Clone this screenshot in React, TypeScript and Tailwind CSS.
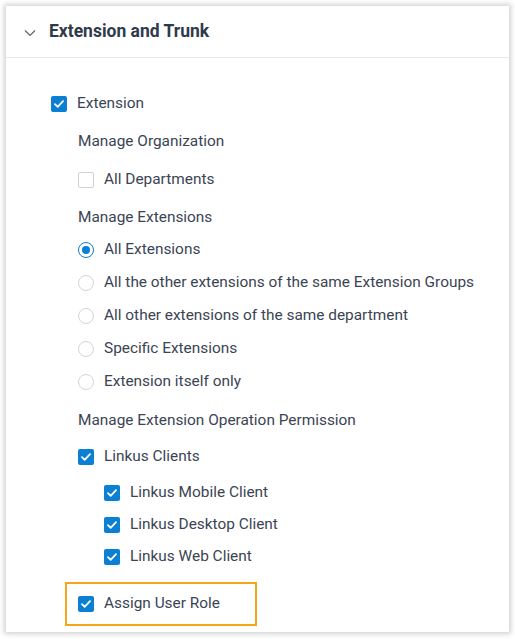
import React from "react";

const Check = () => (
  <span className="flex h-[16px] w-[16px] shrink-0 items-center justify-center rounded-[2px] bg-[#0b7fd2]">
    <svg width="10" height="8" viewBox="0 0 10 8" fill="none">
      <path d="M1 4.2L3.7 6.8L9 1.2" stroke="white" strokeWidth="1.8" strokeLinecap="round" strokeLinejoin="round" />
    </svg>
  </span>
);

const Empty = () => (
  <span className="h-[16px] w-[16px] shrink-0 rounded-[2px] border border-[#cfd0da] bg-white" />
);

const Radio = ({ on }: { on?: boolean }) =>
  on ? (
    <span className="flex h-[16px] w-[16px] shrink-0 items-center justify-center rounded-full border border-[#0b7fd2] bg-white">
      <span className="h-[8px] w-[8px] rounded-full bg-[#0b7fd2]" />
    </span>
  ) : (
    <span className="h-[16px] w-[16px] shrink-0 rounded-full border border-[#d3d4de] bg-white" />
  );

const Row = ({ mt, pl, icon, text }: { mt: string; pl: string; icon?: React.ReactNode; text: string }) => (
  <div className={`flex h-[20px] items-center gap-[10px] ${mt} ${pl}`}>
    {icon}
    <span>{text}</span>
  </div>
);

export default function App() {
  return (
    <div className="h-[639px] w-[515px] bg-white p-[6px]" style={{ fontFamily: "Roboto, 'Noto Sans', sans-serif" }}>
      <div className="h-[626px] w-[503px] bg-white shadow-[0_0_5px_2px_rgba(0,0,0,0.18)]">
        <div className="flex h-[52px] items-center border-b border-[#e8e8f0] pl-[18px]">
          <svg width="12" height="8" viewBox="0 0 12 8" fill="none" className="mt-[2px]">
            <path d="M1 1.5L6 6.5L11 1.5" stroke="#5b6372" strokeWidth="1.2" />
          </svg>
          <span className="ml-[13px] text-[17.5px] font-bold text-[#2f3a4b]">Extension and Trunk</span>
        </div>
        <div className="flex flex-col pt-[36px] text-[15.4px] text-[#3b4454]">
          <div className="flex h-[20px] items-center gap-[10px] pl-[45px]">
            <Check />
            <span>Extension</span>
          </div>
          <Row mt="mt-[18px]" pl="pl-[72px]" text="Manage Organization" />
          <Row mt="mt-[18px]" pl="pl-[72px]" icon={<Empty />} text="All Departments" />
          <Row mt="mt-[18px]" pl="pl-[72px]" text="Manage Extensions" />
          <Row mt="mt-[12px]" pl="pl-[72px]" icon={<Radio on />} text="All Extensions" />
          <Row mt="mt-[13px]" pl="pl-[72px]" icon={<Radio />} text="All the other extensions of the same Extension Groups" />
          <Row mt="mt-[13px]" pl="pl-[72px]" icon={<Radio />} text="All other extensions of the same department" />
          <Row mt="mt-[13px]" pl="pl-[72px]" icon={<Radio />} text="Specific Extensions" />
          <Row mt="mt-[13px]" pl="pl-[72px]" icon={<Radio />} text="Extension itself only" />
          <Row mt="mt-[19px]" pl="pl-[72px]" text="Manage Extension Operation Permission" />
          <Row mt="mt-[16px]" pl="pl-[72px]" icon={<Check />} text="Linkus Clients" />
          <Row mt="mt-[16px]" pl="pl-[98px]" icon={<Check />} text="Linkus Mobile Client" />
          <Row mt="mt-[12px]" pl="pl-[98px]" icon={<Check />} text="Linkus Desktop Client" />
          <Row mt="mt-[12px]" pl="pl-[98px]" icon={<Check />} text="Linkus Web Client" />
          <div className="ml-[59px] mt-[15px] flex h-[44px] w-[192px] items-center gap-[10px] border-2 border-[#f5a516] pl-[11px]">
            <Check />
            <span>Assign User Role</span>
          </div>
        </div>
      </div>
    </div>
  );
}
